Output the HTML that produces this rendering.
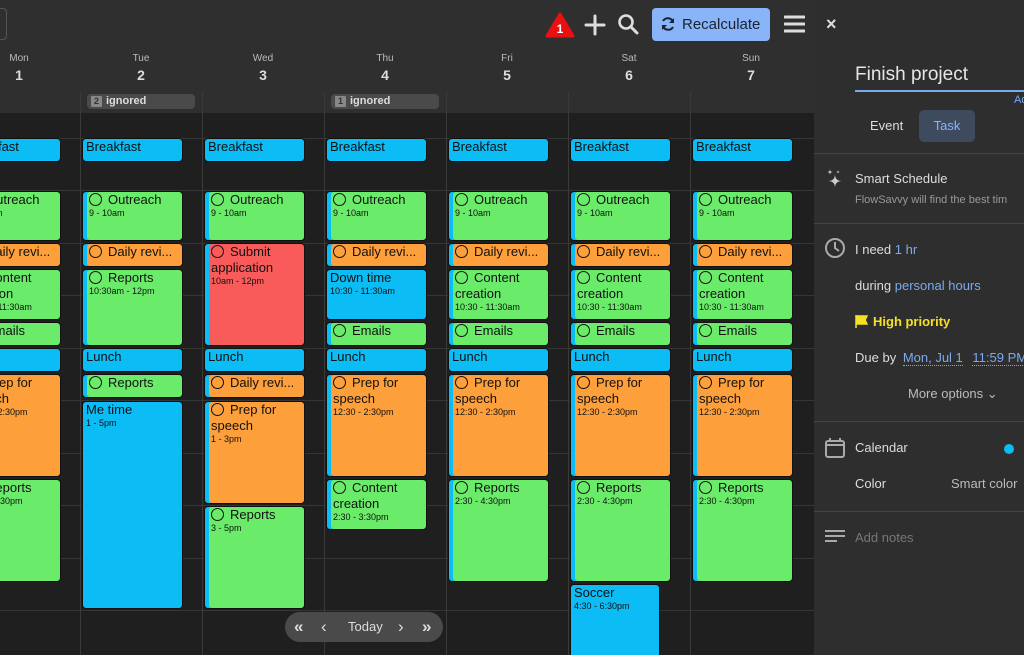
<!DOCTYPE html>
<html style="overflow:hidden;width:1024px;height:655px"><head><meta charset="utf-8"><style>
*{box-sizing:border-box;margin:0;padding:0}
body{width:1024px;height:655px;overflow:hidden;background:#1f1f1f;font-family:"Liberation Sans",sans-serif;position:relative}
.top{position:absolute;left:0;top:0;width:814px;height:113px;background:#2f2f2f}
.vl{position:absolute;top:92px;height:563px;width:1px;background:#3a3a3a}
.hl{position:absolute;left:0;width:814px;height:1px;background:#363636}
.dh{position:absolute;top:53px;width:122px;text-align:center;color:#ddd}
.dh .d{font-size:10px;color:#bbb}
.dh .n{font-size:14px;font-weight:bold;margin-top:3px}
.ign{position:absolute;top:94px;height:15px;width:108px;background:#4a4a4a;border-radius:4px;color:#ddd;font-size:11px;font-weight:bold;line-height:15px;padding-left:4px}
.ign b{display:inline-block;background:#888;color:#333;font-size:9px;width:11px;height:11px;line-height:11px;text-align:center;margin-right:4px;border-radius:1px}
.e{position:absolute;width:101px;border-radius:4px;border:1px solid #111;color:#111;font-size:13px;line-height:16px;padding:0 2px 0 3px;overflow:hidden}
.t{box-shadow:inset 4px 0 #0bbcf5;padding-left:6px}
.g{background:#6aeb6a}.o{background:#fd9f3a}.b{background:#0bbcf5}.r{background:#f95a5a}
.c{display:inline-block;width:13px;height:13px;border:1.6px solid #111;border-radius:50%;vertical-align:-2px;margin-right:6px}
.s{font-size:9px;line-height:11px;display:block}
.p{position:absolute;left:814px;top:0;width:210px;height:655px;background:#2e2e2e;color:#ddd;font-size:13px;overflow:hidden}
.p .x{position:absolute}
.sep{position:absolute;left:0;width:210px;height:1px;background:#444}
.lnk{color:#7aaaf0}
</style></head><body>
<div class="top"></div>
<div style="position:absolute;left:-10px;top:8px;width:17px;height:32px;border:1px solid #555;border-radius:4px"></div>
<div class="hl" style="top:138px"></div><div class="hl" style="top:190px"></div><div class="hl" style="top:243px"></div><div class="hl" style="top:295px"></div><div class="hl" style="top:348px"></div><div class="hl" style="top:400px"></div><div class="hl" style="top:453px"></div><div class="hl" style="top:505px"></div><div class="hl" style="top:558px"></div><div class="hl" style="top:610px"></div>
<div class="vl" style="left:80px"></div><div class="vl" style="left:202px"></div><div class="vl" style="left:324px"></div><div class="vl" style="left:446px"></div><div class="vl" style="left:568px"></div><div class="vl" style="left:690px"></div>
<div class="dh" style="left:-42px"><div class="d">Mon</div><div class="n">1</div></div>
<div class="dh" style="left:80px"><div class="d">Tue</div><div class="n">2</div></div>
<div class="dh" style="left:202px"><div class="d">Wed</div><div class="n">3</div></div>
<div class="dh" style="left:324px"><div class="d">Thu</div><div class="n">4</div></div>
<div class="dh" style="left:446px"><div class="d">Fri</div><div class="n">5</div></div>
<div class="dh" style="left:568px"><div class="d">Sat</div><div class="n">6</div></div>
<div class="dh" style="left:690px"><div class="d">Sun</div><div class="n">7</div></div>
<div class="ign" style="left:87px"><b>2</b>ignored</div>
<div class="ign" style="left:331px"><b>1</b>ignored</div>
<svg style="position:absolute;left:545px;top:12px" width="30" height="26" viewBox="0 0 30 26"><path d="M15 2 L28 24 L2 24 Z" fill="#e81010" stroke="#e81010" stroke-width="3" stroke-linejoin="round"/><text x="15" y="21" font-size="12" font-weight="bold" fill="#fff" text-anchor="middle" font-family="Liberation Sans">1</text></svg>
<svg style="position:absolute;left:584px;top:14px" width="22" height="22" viewBox="0 0 22 22"><path d="M11 2V20M2 11H20" stroke="#ddd" stroke-width="3" stroke-linecap="round"/></svg>
<svg style="position:absolute;left:617px;top:13px" width="22" height="22" viewBox="0 0 22 22"><circle cx="9" cy="9" r="6.5" fill="none" stroke="#ddd" stroke-width="2.6"/><path d="M14 14L20 20" stroke="#ddd" stroke-width="3" stroke-linecap="round"/></svg>
<div style="position:absolute;left:652px;top:8px;width:118px;height:33px;background:#8ab4f8;border-radius:4px;color:#1a2233;font-size:15px;line-height:33px;padding-left:30px">Recalculate</div>
<svg style="position:absolute;left:660px;top:16px" width="16" height="16" viewBox="0 0 16 16"><path d="M13 6A5.5 5.5 0 0 0 3 5M3 10A5.5 5.5 0 0 0 13 11" fill="none" stroke="#1a2233" stroke-width="2"/><path d="M14 2V7H9Z M2 14V9H7Z" fill="#1a2233"/></svg>
<svg style="position:absolute;left:784px;top:14px" width="21" height="20" viewBox="0 0 21 20"><path d="M1 3H20M1 10H20M1 17H20" stroke="#ddd" stroke-width="3" stroke-linecap="round"/></svg>

<div class="e b" style="left:-40px;top:138px;height:24px">Breakfast</div>
<div class="e g t" style="left:-40px;top:191px;height:50px"><span class="c"></span>Outreach<span class="s">9 - 10am</span></div>
<div class="e o t" style="left:-40px;top:243px;height:24px"><span class="c"></span>Daily revi...</div>
<div class="e g t" style="left:-40px;top:269px;height:51px"><span class="c"></span>Content creation<span class="s">10:30 - 11:30am</span></div>
<div class="e g t" style="left:-40px;top:322px;height:24px"><span class="c"></span>Emails</div>
<div class="e b" style="left:-40px;top:348px;height:24px">Lunch</div>
<div class="e o t" style="left:-40px;top:374px;height:103px"><span class="c"></span>Prep for speech<span class="s">12:30 - 2:30pm</span></div>
<div class="e g t" style="left:-40px;top:479px;height:103px"><span class="c"></span>Reports<span class="s">2:30 - 4:30pm</span></div>
<div class="e b" style="left:82px;top:138px;height:24px">Breakfast</div>
<div class="e g t" style="left:82px;top:191px;height:50px"><span class="c"></span>Outreach<span class="s">9 - 10am</span></div>
<div class="e o t" style="left:82px;top:243px;height:24px"><span class="c"></span>Daily revi...</div>
<div class="e g t" style="left:82px;top:269px;height:77px"><span class="c"></span>Reports<span class="s">10:30am - 12pm</span></div>
<div class="e b" style="left:82px;top:348px;height:24px">Lunch</div>
<div class="e g t" style="left:82px;top:374px;height:24px"><span class="c"></span>Reports</div>
<div class="e b" style="left:82px;top:401px;height:208px">Me time<span class="s">1 - 5pm</span></div>
<div class="e b" style="left:204px;top:138px;height:24px">Breakfast</div>
<div class="e g t" style="left:204px;top:191px;height:50px"><span class="c"></span>Outreach<span class="s">9 - 10am</span></div>
<div class="e r t" style="left:204px;top:243px;height:103px"><span class="c"></span>Submit application<span class="s">10am - 12pm</span></div>
<div class="e b" style="left:204px;top:348px;height:24px">Lunch</div>
<div class="e o t" style="left:204px;top:374px;height:24px"><span class="c"></span>Daily revi...</div>
<div class="e o t" style="left:204px;top:401px;height:103px"><span class="c"></span>Prep for speech<span class="s">1 - 3pm</span></div>
<div class="e g t" style="left:204px;top:506px;height:103px"><span class="c"></span>Reports<span class="s">3 - 5pm</span></div>
<div class="e b" style="left:326px;top:138px;height:24px">Breakfast</div>
<div class="e g t" style="left:326px;top:191px;height:50px"><span class="c"></span>Outreach<span class="s">9 - 10am</span></div>
<div class="e o t" style="left:326px;top:243px;height:24px"><span class="c"></span>Daily revi...</div>
<div class="e b" style="left:326px;top:269px;height:51px">Down time<span class="s">10:30 - 11:30am</span></div>
<div class="e g t" style="left:326px;top:322px;height:24px"><span class="c"></span>Emails</div>
<div class="e b" style="left:326px;top:348px;height:24px">Lunch</div>
<div class="e o t" style="left:326px;top:374px;height:103px"><span class="c"></span>Prep for speech<span class="s">12:30 - 2:30pm</span></div>
<div class="e g t" style="left:326px;top:479px;height:51px"><span class="c"></span>Content creation<span class="s">2:30 - 3:30pm</span></div>
<div class="e b" style="left:448px;top:138px;height:24px">Breakfast</div>
<div class="e g t" style="left:448px;top:191px;height:50px"><span class="c"></span>Outreach<span class="s">9 - 10am</span></div>
<div class="e o t" style="left:448px;top:243px;height:24px"><span class="c"></span>Daily revi...</div>
<div class="e g t" style="left:448px;top:269px;height:51px"><span class="c"></span>Content creation<span class="s">10:30 - 11:30am</span></div>
<div class="e g t" style="left:448px;top:322px;height:24px"><span class="c"></span>Emails</div>
<div class="e b" style="left:448px;top:348px;height:24px">Lunch</div>
<div class="e o t" style="left:448px;top:374px;height:103px"><span class="c"></span>Prep for speech<span class="s">12:30 - 2:30pm</span></div>
<div class="e g t" style="left:448px;top:479px;height:103px"><span class="c"></span>Reports<span class="s">2:30 - 4:30pm</span></div>
<div class="e b" style="left:570px;top:138px;height:24px">Breakfast</div>
<div class="e g t" style="left:570px;top:191px;height:50px"><span class="c"></span>Outreach<span class="s">9 - 10am</span></div>
<div class="e o t" style="left:570px;top:243px;height:24px"><span class="c"></span>Daily revi...</div>
<div class="e g t" style="left:570px;top:269px;height:51px"><span class="c"></span>Content creation<span class="s">10:30 - 11:30am</span></div>
<div class="e g t" style="left:570px;top:322px;height:24px"><span class="c"></span>Emails</div>
<div class="e b" style="left:570px;top:348px;height:24px">Lunch</div>
<div class="e o t" style="left:570px;top:374px;height:103px"><span class="c"></span>Prep for speech<span class="s">12:30 - 2:30pm</span></div>
<div class="e g t" style="left:570px;top:479px;height:103px"><span class="c"></span>Reports<span class="s">2:30 - 4:30pm</span></div>
<div class="e b" style="left:570px;top:584px;height:71px;width:90px;border-bottom:none;border-radius:4px 4px 0 0">Soccer<span class="s">4:30 - 6:30pm</span></div>
<div class="e b" style="left:692px;top:138px;height:24px">Breakfast</div>
<div class="e g t" style="left:692px;top:191px;height:50px"><span class="c"></span>Outreach<span class="s">9 - 10am</span></div>
<div class="e o t" style="left:692px;top:243px;height:24px"><span class="c"></span>Daily revi...</div>
<div class="e g t" style="left:692px;top:269px;height:51px"><span class="c"></span>Content creation<span class="s">10:30 - 11:30am</span></div>
<div class="e g t" style="left:692px;top:322px;height:24px"><span class="c"></span>Emails</div>
<div class="e b" style="left:692px;top:348px;height:24px">Lunch</div>
<div class="e o t" style="left:692px;top:374px;height:103px"><span class="c"></span>Prep for speech<span class="s">12:30 - 2:30pm</span></div>
<div class="e g t" style="left:692px;top:479px;height:103px"><span class="c"></span>Reports<span class="s">2:30 - 4:30pm</span></div>

<div style="position:absolute;left:285px;top:612px;width:158px;height:30px;background:#4a4a4a;border-radius:15px;color:#ddd;font-size:13px;line-height:30px">
<span style="position:absolute;left:9px;font-size:17px;font-weight:bold">«</span>
<span style="position:absolute;left:36px;font-size:17px">‹</span>
<span style="position:absolute;left:63px">Today</span>
<span style="position:absolute;left:113px;font-size:17px">›</span>
<span style="position:absolute;left:137px;font-size:17px;font-weight:bold">»</span>
</div>

<div class="p">
<div class="x" style="left:12px;top:14px;font-size:18px;font-weight:bold;color:#ddd">×</div>
<div class="x" style="left:41px;top:64px;font-size:19px;color:#e6e6e6">Finish project</div>
<div class="x" style="left:41px;top:90px;width:169px;height:2px;background:#7aaaf0"></div>
<div class="x lnk" style="left:200px;top:94px;font-size:11px">Ad</div>
<div class="x" style="left:56px;top:118px;font-size:13px">Event</div>
<div class="x" style="left:105px;top:110px;width:56px;height:32px;background:#3e4a5e;border-radius:5px;color:#8ab4f8;font-size:13px;line-height:32px;text-align:center">Task</div>
<div class="sep" style="top:153px"></div>
<svg class="x" style="left:12px;top:168px" width="20" height="22" viewBox="0 0 20 22"><path d="M9 6 Q9 13 16 13 Q9 13 9 20 Q9 13 2 13 Q9 13 9 6Z" fill="#ccc"/><path d="M4 1 Q4 4 7 4 Q4 4 4 7 Q4 4 1 4 Q4 4 4 1Z M12 2 Q12 4 14 4 Q12 4 12 6 Q12 4 10 4 Q12 4 12 2Z" fill="#ccc"/></svg>
<div class="x" style="left:41px;top:171px;font-size:13px">Smart Schedule</div>
<div class="x" style="left:41px;top:194px;font-size:11px;color:#999;white-space:nowrap">FlowSavvy will find the best tim</div>
<div class="sep" style="top:223px"></div>
<svg class="x" style="left:10px;top:237px" width="22" height="22" viewBox="0 0 22 22"><circle cx="11" cy="11" r="9" fill="none" stroke="#aaa" stroke-width="2"/><path d="M11 5V11L15 14" fill="none" stroke="#aaa" stroke-width="2"/></svg>
<div class="x" style="left:41px;top:242px">I need <span class="lnk">1 hr</span></div>
<div class="x" style="left:41px;top:278px">during <span class="lnk">personal hours</span></div>
<svg class="x" style="left:41px;top:315px" width="13" height="13" viewBox="0 0 13 13"><path d="M1 0V13M1 1H12L10 5L12 9H1" fill="#f5e025" stroke="#f5e025" stroke-width="1.5"/></svg>
<div class="x" style="left:59px;top:314px;color:#f5e025;font-weight:bold">High priority</div>
<div class="x" style="left:41px;top:350px;white-space:nowrap">Due by <span class="lnk" style="margin-left:3px;border-bottom:1px dotted #7aaaf0">Mon, Jul 1</span> <span class="lnk" style="margin-left:6px;border-bottom:1px dotted #7aaaf0">11:59 PM</span></div>
<div class="x" style="left:94px;top:386px;color:#bbb">More options ⌄</div>
<div class="sep" style="top:421px"></div>
<svg class="x" style="left:10px;top:437px" width="22" height="22" viewBox="0 0 22 22"><rect x="2" y="4" width="18" height="16" rx="2" fill="none" stroke="#aaa" stroke-width="2"/><path d="M2 8H20M6 1V5M16 1V5" stroke="#aaa" stroke-width="2"/></svg>
<div class="x" style="left:41px;top:440px">Calendar</div>
<div class="x" style="left:190px;top:444px;width:10px;height:10px;border-radius:50%;background:#0bbcf5"></div>
<div class="x" style="left:41px;top:476px">Color</div>
<div class="x" style="left:137px;top:476px;color:#bbb;white-space:nowrap">Smart color</div>
<div class="sep" style="top:511px"></div>
<svg class="x" style="left:10px;top:529px" width="22" height="16" viewBox="0 0 22 16"><path d="M1 2H21M1 7H21M1 12H13" stroke="#aaa" stroke-width="2"/></svg>
<div class="x" style="left:41px;top:530px;color:#777">Add notes</div>
</div>
</body></html>
